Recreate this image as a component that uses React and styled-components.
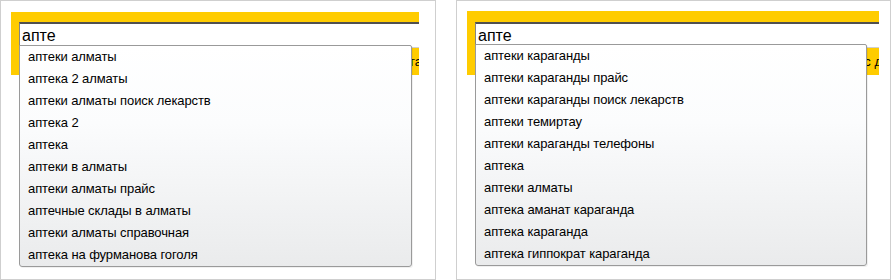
import React from "react";
import styled, { createGlobalStyle } from "styled-components";

const GlobalStyle = createGlobalStyle`
  body {
    margin: 0;
    background: #fff;
    font-family: "Liberation Sans", Arial, sans-serif;
  }
`;

const Page = styled.div`
  display: flex;
  gap: 20px;
  width: 892px;
  height: 280px;
`;

const Panel = styled.div`
  box-sizing: border-box;
  width: ${(p) => p.width}px;
  height: 280px;
  border: 1px solid #cfcfcf;
  padding: ${(p) => p.top}px ${(p) => p.right}px 0 10px;
`;

const Search = styled.div`
  position: relative;
  background: #ffcc00;
  padding: ${(p) => p.pad}px 0 0 8px;
`;

const Field = styled.div`
  box-sizing: border-box;
  height: 26px;
  background: #fff;
  border-top: 2px solid #505050;
  border-left: 1px solid #858585;
  border-bottom: 1px solid #cfcfcf;
  padding: 0 2px;
  font-size: 16px;
  line-height: 23px;
  color: #000;
`;

const Hint = styled.div`
  height: 27px;
  overflow: hidden;
  display: flex;
  justify-content: flex-end;
  align-items: center;
  font-size: 13px;
  color: #000;
  white-space: nowrap;
`;

const HintText = styled.span`
  margin-right: ${(p) => p.shift}px;
`;

const Suggest = styled.ul`
  position: absolute;
  top: 33px;
  left: 8px;
  box-sizing: border-box;
  width: ${(p) => p.width}px;
  margin: 0;
  padding: 0;
  list-style: none;
  border: 1px solid #9a9a9a;
  border-radius: 0 2px 3px 3px;
  background: linear-gradient(#ffffff, #fbfcfd 35%, #eaebec);
  box-shadow: 1px 1px 0 rgba(0, 0, 0, 0.06);
`;

const Item = styled.li`
  height: 22px;
  line-height: 22px;
  padding-left: 8px;
  font-size: 13px;
  letter-spacing: -0.1px;
  color: #000;
  white-space: nowrap;
`;

const left = [
  "аптеки алматы",
  "аптека 2 алматы",
  "аптеки алматы поиск лекарств",
  "аптека 2",
  "аптека",
  "аптеки в алматы",
  "аптеки алматы прайс",
  "аптечные склады в алматы",
  "аптеки алматы справочная",
  "аптека на фурманова гоголя",
];

const right = [
  "аптеки караганды",
  "аптеки караганды прайс",
  "аптеки караганды поиск лекарств",
  "аптеки темиртау",
  "аптеки караганды телефоны",
  "аптека",
  "аптеки алматы",
  "аптека аманат караганда",
  "аптека караганда",
  "аптека гиппократ караганда",
];

function Box({ width, top, right: pr, pad, hint, shift, items, listWidth }) {
  return (
    <Panel width={width} top={top} right={pr}>
      <Search pad={pad}>
        <Field>апте</Field>
        <Hint>
          <HintText shift={shift}>{hint}</HintText>
        </Hint>
        <Suggest width={listWidth}>
          {items.map((t) => (
            <Item key={t}>{t}</Item>
          ))}
        </Suggest>
      </Search>
    </Panel>
  );
}

export default function App() {
  return (
    <>
      <GlobalStyle />
      <Page>
        <Box
          width={436}
          top={11}
          right={16}
          pad={10}
          hint="например, аптеки караганда"
          shift={-25}
          items={left}
          listWidth={393}
        />
        <Box
          width={435}
          top={10}
          right={11}
          pad={11}
          hint="например, аптеки с доставкой"
          shift={-57}
          items={right}
          listWidth={392}
        />
      </Page>
    </>
  );
}
